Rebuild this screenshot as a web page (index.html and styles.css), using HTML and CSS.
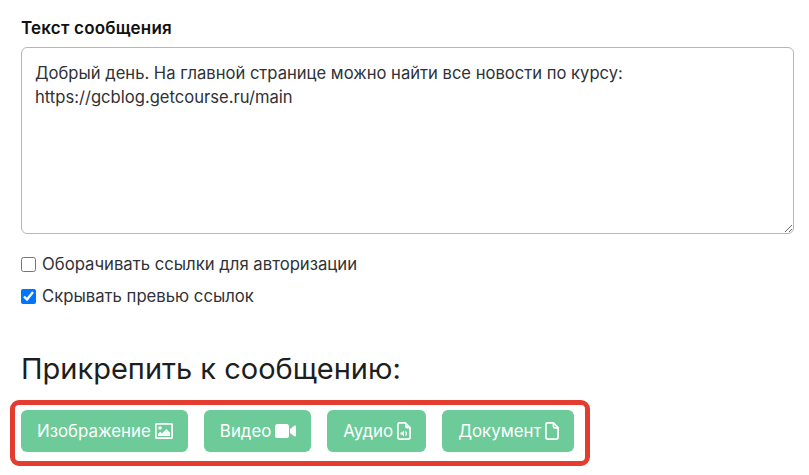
FILE: index.html
```html
<!DOCTYPE html>
<html lang="ru">
<head>
    <meta charset="UTF-8">
    <title>Текст сообщения</title>
    <link rel="stylesheet" href="styles.css">
</head>
<body>

    <div class="container">
        <label class="field-label" for="message">Текст сообщения</label>
        <textarea class="message-input" id="message">Добрый день. На главной странице можно найти все новости по курсу:
https://gcblog.getcourse.ru/main</textarea>

        <label class="check-row">
            <input type="checkbox">
            Оборачивать ссылки для авторизации
        </label>
        <label class="check-row">
            <input type="checkbox" checked>
            Скрывать превью ссылок
        </label>

        <h2 class="attach-title">Прикрепить к сообщению:</h2>

        <div class="attach-box">
            <button class="button">
                Изображение
                <svg class="icon" width="18" height="16" viewBox="0 0 18 16">
                    <path fill="#fff" fill-rule="evenodd" d="M1.500 0h15A1.500 1.500 0 0 1 18 1.500v13a1.500 1.500 0 0 1-1.500 1.500h-15A1.500 1.500 0 0 1 0 14.500v-13A1.500 1.500 0 0 1 1.500 0zM2 1.800a.3.3 0 0 0-.3.3v11.800a.3.3 0 0 0 .3.3h14a.3.3 0 0 0 .3-.3V2.100a.3.3 0 0 0-.3-.3z"/>
                    <circle fill="#fff" cx="5" cy="5" r="1.800"/>
                    <path fill="#fff" d="M3 13v-2l2.300-2.300 1.700 1.700 4.300-4.400 3.700 3.700V13z"/>
                </svg>
            </button>
            <button class="button">
                Видео
                <svg class="icon" width="21" height="14" viewBox="0 0 21 14">
                    <rect fill="#fff" x="0" y="0" width="14" height="14" rx="2.500"/>
                    <path fill="#fff" d="M15 5l4.300-3.300c.7-.5 1.700 0 1.700.9v8.800c0 .9-1 1.400-1.700.9L15 9z"/>
                </svg>
            </button>
            <button class="button">
                Аудио
                <svg class="icon" width="14" height="18" viewBox="0 0 14 18">
                    <path fill="none" stroke="#fff" stroke-width="1.700" d="M2.400.9h5.800l4.900 5V15a2.100 2.100 0 0 1-2.100 2.100H3A2.100 2.100 0 0 1 .9 15V2.400A1.500 1.500 0 0 1 2.400.9z"/>
                    <path fill="#fff" d="M8 1v3.500A2 2 0 0 0 10 6.500h3V5L9 1z"/>
                    <path fill="#fff" d="M3.500 10.500h1.300l2.200-2v6l-2.200-2H3.500z"/>
                    <path fill="none" stroke="#fff" stroke-width="1.200" d="M8.500 9.500c1.200 1 1.200 3 0 4"/>
                </svg>
            </button>
            <button class="button">
                Документ
                <svg class="icon" width="14" height="18" viewBox="0 0 14 18">
                    <path fill="none" stroke="#fff" stroke-width="1.700" stroke-linejoin="round" d="M2.400.9h6l4.700 4.800V15a2.100 2.100 0 0 1-2.100 2.100H3A2.100 2.100 0 0 1 .9 15V2.400A1.500 1.500 0 0 1 2.400.9z"/>
                    <path fill="none" stroke="#fff" stroke-width="1.700" d="M8.400 1v3.300a1.500 1.500 0 0 0 1.500 1.500H13"/>
                </svg>
            </button>
        </div>
    </div>

</body>
</html>
```

FILE: styles.css
```css
body {
    font-family: 'Inter', 'Noto Sans', sans-serif;
    background: #fff;
    color: #212529;
    margin: 0;
}

.container {
    width: 773px;
    margin-left: 21px;
    padding-top: 18px;
}

.field-label {
    display: block;
    font-size: 17px;
    font-weight: 600;
    letter-spacing: 0.2px;
    line-height: 20px;
    color: #111;
    margin-bottom: 9px;
}

.message-input {
    display: block;
    box-sizing: border-box;
    width: 773px;
    height: 187px;
    padding: 13px 13px;
    font-family: inherit;
    font-size: 16.6px;
    line-height: 24px;
    color: #2f3237;
    border: 1px solid #b5b5c3;
    border-radius: 6px;
    margin-bottom: 18px;
    resize: vertical;
}

.check-row {
    display: flex;
    align-items: center;
    gap: 6px;
    font-size: 16.7px;
    line-height: 24px;
    margin-bottom: 8px;
    color: #2f3237;
}

.check-row input {
    width: 15px;
    height: 15px;
    margin: 0;
}

.attach-title {
    font-size: 29px;
    font-weight: 400;
    line-height: 34px;
    color: #1c1e21;
    margin: 44px 0 14px;
}

.attach-box {
    display: inline-flex;
    gap: 16px;
    margin-left: -11px;
    padding: 5px 11px 9px 6px;
    border: 5px solid #e53c30;
    border-radius: 9px;
}

.button {
    display: flex;
    align-items: center;
    gap: 4px;
    height: 42px;
    padding: 0 15px 0 16px;
    font-family: inherit;
    font-size: 16.85px;
    color: #fff;
    background-color: #6ccb98;
    border: none;
    border-radius: 6px;
}

.icon {
    display: block;
}
```
